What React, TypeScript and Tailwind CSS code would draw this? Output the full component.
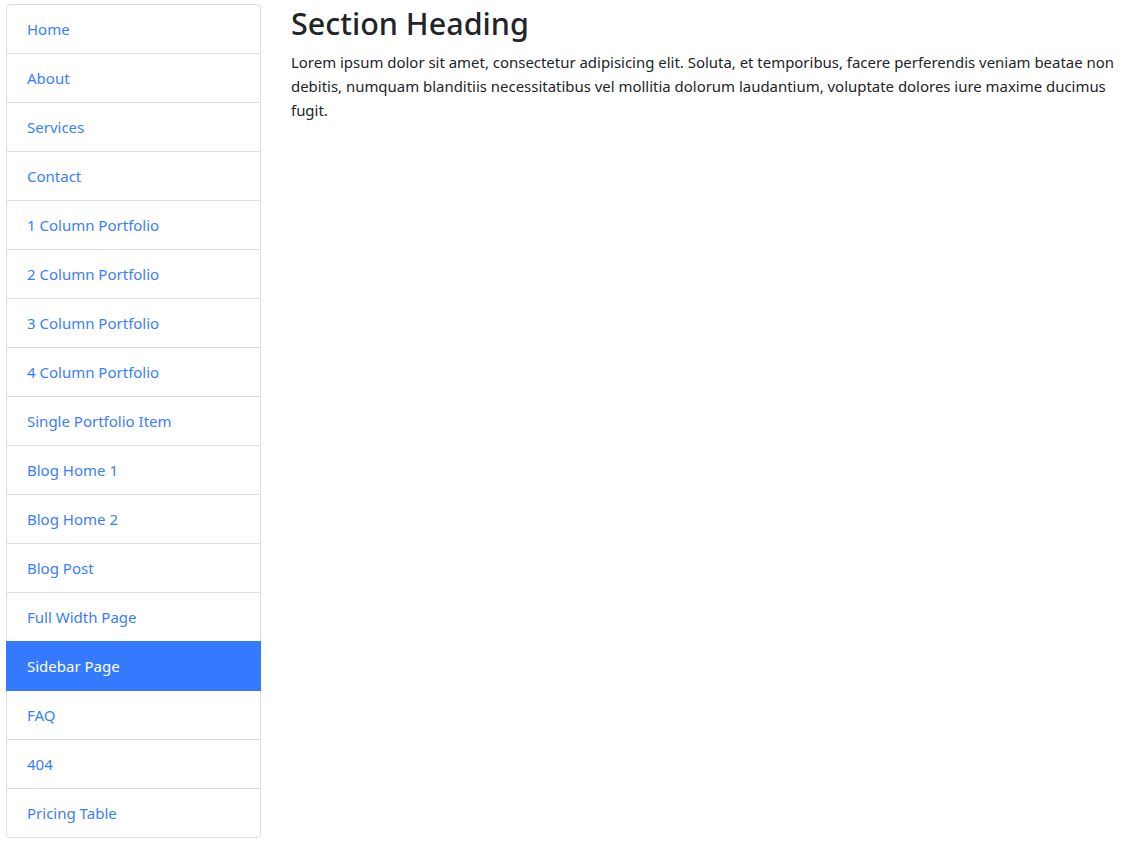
import React from "react";

const items = [
  "Home",
  "About",
  "Services",
  "Contact",
  "1 Column Portfolio",
  "2 Column Portfolio",
  "3 Column Portfolio",
  "4 Column Portfolio",
  "Single Portfolio Item",
  "Blog Home 1",
  "Blog Home 2",
  "Blog Post",
  "Full Width Page",
  "Sidebar Page",
  "FAQ",
  "404",
  "Pricing Table",
];

export default function App() {
  return (
    <div
      className="flex bg-white text-[#212529] pt-1 pl-[6px] min-h-[848px]"
      style={{ fontFamily: '"Noto Sans", "Open Sans", sans-serif' }}
    >
      <div className="w-[255px] shrink-0 flex flex-col">
        {items.map((it, i) => {
          const active = it === "Sidebar Page";
          const first = i === 0;
          const last = i === items.length - 1;
          return (
            <a
              key={it}
              href="#"
              className={
                "block h-[50px] px-5 text-[15px] leading-[24px] pt-[12px] border " +
                (i > 0 ? "-mt-px " : "") +
                (first ? "rounded-t-[4px] " : "") +
                (last ? "rounded-b-[4px] " : "") +
                (active
                  ? "bg-[#337aff] border-[#337aff] text-white relative z-10"
                  : "bg-white border-[#dfdfdf] text-[#3a7eff]")
              }
            >
              {it}
            </a>
          );
        })}
      </div>
      <div className="ml-[30px] flex-1 pr-2">
        <h2 className="text-[30.5px] leading-[38px] font-medium mt-0 mb-[8px]">Section Heading</h2>
        <p className="text-[14.95px] leading-[24px] whitespace-nowrap">
          Lorem ipsum dolor sit amet, consectetur adipisicing elit. Soluta, et temporibus, facere perferendis veniam beatae non
          <br />
          debitis, numquam blanditiis necessitatibus vel mollitia dolorum laudantium, voluptate dolores iure maxime ducimus
          <br />
          fugit.
        </p>
      </div>
    </div>
  );
}
